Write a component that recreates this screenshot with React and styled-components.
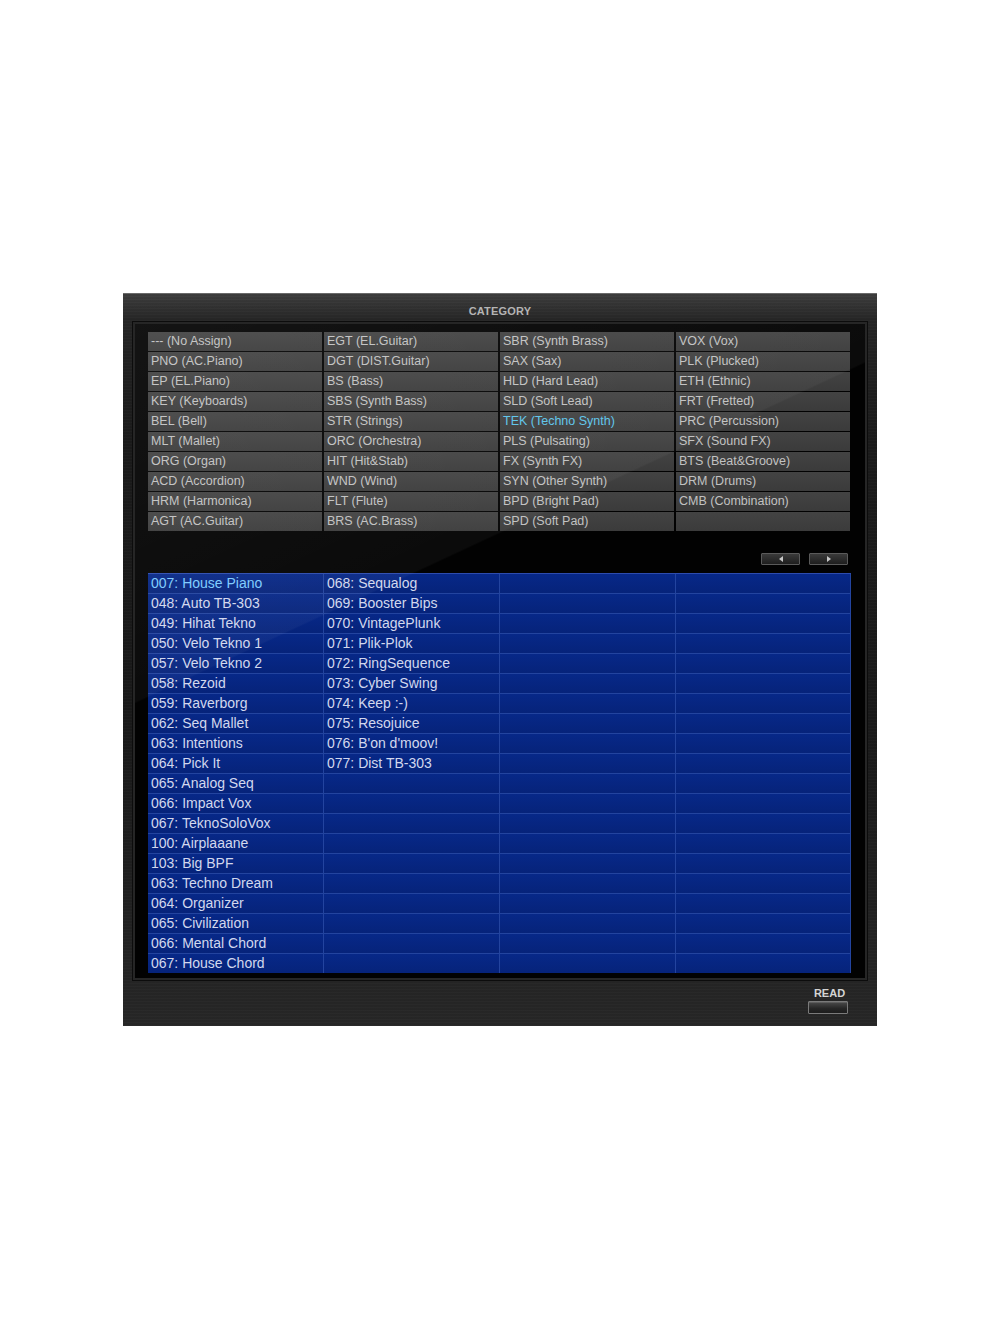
import React from 'react'
import styled, { createGlobalStyle } from 'styled-components'

const categories = [
  ['--- (No Assign)', 'EGT (EL.Guitar)', 'SBR (Synth Brass)', 'VOX (Vox)'],
  ['PNO (AC.Piano)', 'DGT (DIST.Guitar)', 'SAX (Sax)', 'PLK (Plucked)'],
  ['EP (EL.Piano)', 'BS (Bass)', 'HLD (Hard Lead)', 'ETH (Ethnic)'],
  ['KEY (Keyboards)', 'SBS (Synth Bass)', 'SLD (Soft Lead)', 'FRT (Fretted)'],
  ['BEL (Bell)', 'STR (Strings)', 'TEK (Techno Synth)', 'PRC (Percussion)'],
  ['MLT (Mallet)', 'ORC (Orchestra)', 'PLS (Pulsating)', 'SFX (Sound FX)'],
  ['ORG (Organ)', 'HIT (Hit&Stab)', 'FX (Synth FX)', 'BTS (Beat&Groove)'],
  ['ACD (Accordion)', 'WND (Wind)', 'SYN (Other Synth)', 'DRM (Drums)'],
  ['HRM (Harmonica)', 'FLT (Flute)', 'BPD (Bright Pad)', 'CMB (Combination)'],
  ['AGT (AC.Guitar)', 'BRS (AC.Brass)', 'SPD (Soft Pad)', ''],
]

const col1 = [
  '007: House Piano', '048: Auto TB-303', '049: Hihat Tekno', '050: Velo Tekno 1',
  '057: Velo Tekno 2', '058: Rezoid', '059: Raverborg', '062: Seq Mallet',
  '063: Intentions', '064: Pick It', '065: Analog Seq', '066: Impact Vox',
  '067: TeknoSoloVox', '100: Airplaaane', '103: Big BPF', '063: Techno Dream',
  '064: Organizer', '065: Civilization', '066: Mental Chord', '067: House Chord',
]
const col2 = [
  '068: Sequalog', '069: Booster Bips', '070: VintagePlunk', '071: Plik-Plok',
  '072: RingSequence', '073: Cyber Swing', '074: Keep :-)', '075: Resojuice',
  '076: B\'on d\'moov!', '077: Dist TB-303',
]

const GlobalStyle = createGlobalStyle`
  body {
    margin: 0;
    background: #fff;
    font-family: "Liberation Sans", Arial, sans-serif;
  }
`

const Page = styled.div`
  padding-top: 293px;
  height: 1320px;
  box-sizing: border-box;
`

const Panel = styled.div`
  width: 754px;
  height: 733px;
  margin: 0 auto;
  box-sizing: border-box;
  border-top: 1px solid #6a6a6a;
  background:
    repeating-linear-gradient(0deg, rgba(255,255,255,0.015) 0 1px, rgba(0,0,0,0.03) 1px 3px),
    linear-gradient(180deg, #3e3e3e 0%, #262626 3.5%, #1b1b1b 20%, #1a1a1a 60%, #272727 100%);
  display: flex;
  flex-direction: column;
`

const Title = styled.div`
  height: 28px;
  display: flex;
  align-items: center;
  justify-content: center;
  padding-top: 6px;
  box-sizing: border-box;
  font-size: 11px;
  font-weight: bold;
  color: #b4b4b4;
  letter-spacing: 0.2px;
`

const Frame = styled.div`
  position: relative;
  margin: 0 10px;
  height: 658px;
  box-sizing: border-box;
  border: 2px solid #262626;
  outline: 1px solid #0c0c0c;
  background: #020202;
  padding: 8px 14px 5px 13px;
  display: flex;
  flex-direction: column;
  overflow: hidden;

  &::after {
    content: '';
    position: absolute;
    inset: 0;
    pointer-events: none;
    background: linear-gradient(155deg, rgba(255,255,255,0.07) 0%, rgba(255,255,255,0.035) 38%, transparent 38.2%);
  }
`

const CatGrid = styled.div`
  display: grid;
  grid-template-columns: repeat(4, 174px);
  grid-auto-rows: 19px;
  column-gap: 2px;
  row-gap: 1px;
  padding-bottom: 1px;
`

const CatCell = styled.div`
  background: linear-gradient(180deg, #434343 0%, #3b3b3b 100%);
  color: ${p => (p.$active ? '#5cc4ea' : '#c2c2c2')};
  font-size: 12.5px;
  line-height: 19px;
  padding-left: 3px;
  white-space: nowrap;
  overflow: hidden;
`

const NavRow = styled.div`
  display: flex;
  justify-content: flex-end;
  gap: 9px;
  margin-top: 21px;
  padding-right: 3px;
`

const NavButton = styled.div`
  width: 37px;
  height: 10px;
  border: 1px solid #5a5a5a;
  border-radius: 1px;
  background: linear-gradient(180deg, #3a3a3a 0%, #1e1e1e 100%);
  display: flex;
  align-items: center;
  justify-content: center;
`

const Arrow = styled.span`
  width: 0;
  height: 0;
  border-top: 3px solid transparent;
  border-bottom: 3px solid transparent;
  ${p => (p.$dir === 'left'
    ? 'border-right: 4px solid #c8c8c8;'
    : 'border-left: 4px solid #c8c8c8;')}
`

const List = styled.div`
  margin-top: 8px;
  display: grid;
  grid-template-columns: 175px 175px 175px 174px;
  grid-auto-rows: 19px;
  gap: 1px;
  width: 703px;
  background: #23449f;
  border-top: 1px solid #2d4cae;
`

const ListCell = styled.div`
  background: linear-gradient(180deg, #072888 0%, #06237a 100%);
  color: ${p => (p.$active ? '#7ccbff' : '#d2d8ee')};
  font-size: 14px;
  line-height: 19px;
  padding-left: 3px;
  white-space: nowrap;
  overflow: hidden;
`

const Footer = styled.div`
  flex: 1;
  display: flex;
  justify-content: flex-end;
  padding: 7px 29px 0 0;
`

const ReadGroup = styled.div`
  display: flex;
  flex-direction: column;
  align-items: center;
  gap: 2px;
`

const ReadLabel = styled.div`
  font-size: 11px;
  font-weight: bold;
  color: #d4d4d4;
  padding-left: 3px;
`

const ReadButton = styled.div`
  width: 38px;
  height: 11px;
  border: 1px solid #7a7a7a;
  border-radius: 1px;
  background: linear-gradient(180deg, #4a4a4a 0%, #262626 60%, #1c1c1c 100%);
  box-shadow: inset 0 1px 0 rgba(255,255,255,0.12);
`

const App = () => {
  const rows = []
  for (let r = 0; r < 20; r++) {
    rows.push(
      <React.Fragment key={r}>
        <ListCell $active={r === 0}>{col1[r]}</ListCell>
        <ListCell>{col2[r] || ''}</ListCell>
        <ListCell />
        <ListCell />
      </React.Fragment>
    )
  }

  return (
    <Page>
      <GlobalStyle />
      <Panel>
        <Title>CATEGORY</Title>
        <Frame>
          <CatGrid>
            {categories.map((row, i) =>
              row.map((name, j) => (
                <CatCell key={i + '-' + j} $active={name.startsWith('TEK')}>{name}</CatCell>
              ))
            )}
          </CatGrid>
          <NavRow>
            <NavButton><Arrow $dir="left" /></NavButton>
            <NavButton><Arrow $dir="right" /></NavButton>
          </NavRow>
          <List>{rows}</List>
        </Frame>
        <Footer>
          <ReadGroup>
            <ReadLabel>READ</ReadLabel>
            <ReadButton />
          </ReadGroup>
        </Footer>
      </Panel>
    </Page>
  )
}

export default App
